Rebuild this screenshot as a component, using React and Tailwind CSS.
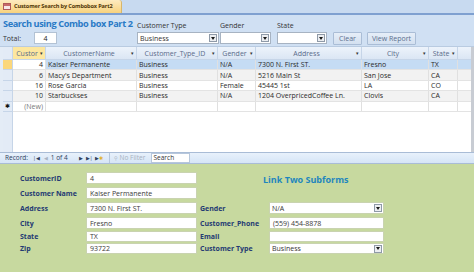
import React from "react";

const rows = [
  { id: 4, name: "Kaiser Permanente", type: "Business", gender: "N/A", address: "7300 N. First ST.", city: "Fresno", state: "TX" },
  { id: 6, name: "Macy's Department", type: "Business", gender: "N/A", address: "5216 Main St", city: "San Jose", state: "CA" },
  { id: 16, name: "Rose Garcia", type: "Business", gender: "Female", address: "45445 1st", city: "LA", state: "CO" },
  { id: 10, name: "Starbuckses", type: "Business", gender: "N/A", address: "1204 OverpricedCoffee Ln.", city: "Clovis", state: "CA" },
];

const columns = [
  { key: "id", label: "Custor", w: "w-[33px]", align: "justify-end pr-[2px]", head: "bg-[#fde79f]" },
  { key: "name", label: "CustomerName", w: "w-[91px]", align: "justify-start pl-[2px]" },
  { key: "type", label: "Customer_Type_ID", w: "w-[81px]", align: "justify-start pl-[2px]" },
  { key: "gender", label: "Gender", w: "w-[38px]", align: "justify-start pl-[2px]" },
  { key: "address", label: "Address", w: "w-[106px]", align: "justify-start pl-[2px]" },
  { key: "city", label: "City", w: "w-[67px]", align: "justify-start pl-[2px]" },
  { key: "state", label: "State", w: "w-[29px]", align: "justify-start pl-[2px]" },
];

const DropBtn = () => (
  <span className="flex h-[8px] w-[8px] shrink-0 items-center justify-center border border-[#8f9aa8] bg-[#eceef1]">
    <svg width="4" height="3" viewBox="0 0 4 3">
      <path d="M0 0h4L2 3z" fill="#1a1a1a" />
    </svg>
  </span>
);

const Combo = ({ value, className }) => (
  <div className={`flex items-center justify-between border bg-white pl-[2px] pr-[1px] text-[7px] leading-none ${className}`}>
    <span className="text-[#333]">{value}</span>
    <DropBtn />
  </div>
);

const FormLabel = ({ children, w }) => (
  <div className={`${w} whitespace-nowrap text-[7px] font-bold leading-none text-[#243a73]`}>{children}</div>
);

const FormBox = ({ children, className }) => (
  <div className={`flex items-center border border-[#c9d3b0] bg-white pl-[3px] text-[7px] leading-none text-[#3a3a3a] ${className}`}>
    {children}
  </div>
);

export default function App() {
  return (
    <div className="h-[272px] w-[474px] overflow-hidden bg-white font-['Open_Sans',sans-serif] leading-none">
      {/* Tab strip */}
      <div className="flex h-[13px] items-end bg-[#c8daf0]">
        <div className="flex h-[13px] w-[122px] items-center gap-[3px] rounded-tr-[3px] border-r border-[#d8b66a] bg-gradient-to-b from-[#fdebc0] to-[#f8d27c] pl-[3px]">
          <span className="flex h-[7px] w-[8px] shrink-0 flex-col border border-[#b05a5a] bg-[#f7e7e7]">
            <span className="h-[2px] w-full bg-[#c76a6a]" />
          </span>
          <span className="whitespace-nowrap text-[5.6px] font-bold tracking-[-0.15px] text-[#4f3608]">Customer Search by Combobox Part2</span>
        </div>
      </div>
      <div className="h-[2px] bg-[#7fa0d0]" />

      {/* Search header */}
      <div className="flex h-[31px] items-start bg-[#d0e0f3]">
        <div className="w-[134px] pl-[3px]">
          <div className="h-[15px] whitespace-nowrap pt-[3px] text-[9.2px] font-bold leading-[11px] tracking-[-0.4px] text-[#2a7ac6]">
            Search using Combo box Part 2
          </div>
          <div className="mt-[2px] flex items-center">
            <span className="w-[31px] text-[7px] text-[#333]">Total:</span>
            <div className="flex h-[12px] w-[23px] items-center justify-center border border-[#b3c2d4] bg-white text-[7px] text-[#222]">
              4
            </div>
          </div>
        </div>
        <div className="ml-[3px] w-[82px]">
          <div className="h-[17px] pt-[6px] text-[7px] leading-[9px] text-[#333]">Customer Type</div>
          <Combo value="Business" className="h-[12px] border-[#a7b3c2]" />
        </div>
        <div className="ml-[1px] w-[51px]">
          <div className="h-[17px] pt-[6px] text-[7px] leading-[9px] text-[#333]">Gender</div>
          <Combo value="" className="h-[12px] border-[#a7b3c2]" />
        </div>
        <div className="ml-[6px] w-[50px]">
          <div className="h-[17px] pt-[6px] text-[7px] leading-[9px] text-[#333]">State</div>
          <Combo value="" className="h-[12px] border-[#a7b3c2]" />
        </div>
        <button className="ml-[6px] mt-[17px] flex h-[13px] w-[29px] items-center justify-center rounded-[1px] border border-[#aabdd6] bg-gradient-to-b from-[#e6eef8] to-[#d3e0f0] text-[7px] text-[#5b6f8e]">
          Clear
        </button>
        <button className="ml-[5px] mt-[17px] flex h-[13px] w-[49px] items-center justify-center rounded-[1px] border border-[#aabdd6] bg-gradient-to-b from-[#e6eef8] to-[#d3e0f0] text-[7px] text-[#5b6f8e]">
          View Report
        </button>
      </div>

      {/* Datasheet */}
      <div className="flex h-[106px] border-t border-[#b9cbe1] bg-white">
        <div className="w-[3px] bg-[#e4ecf6]" />
        <div className="flex w-[10px] flex-col border-r border-[#c6d5e8] bg-[#e3ebf6]">
          <div className="h-[13px] border-b border-[#c6d5e8]" />
          {rows.map((r, i) => (
            <div key={r.id} className={`h-[10.4px] border-b border-[#c6d5e8] ${i === 0 ? "bg-[#fbd77c]" : ""}`} />
          ))}
          <div className="flex h-[10.4px] items-center justify-center border-b border-[#c6d5e8] text-[6px] text-[#111]">✱</div>
        </div>
        <div className="flex flex-1 flex-col">
          <div className="flex h-[13px] border-b border-[#c6d5e8] bg-gradient-to-b from-[#edf3fb] to-[#dbe6f4]">
            {columns.map((c) => (
              <div key={c.key} className={`relative flex ${c.w} items-center justify-center overflow-hidden border-r border-[#c6d5e8] text-[7px] text-[#5a6b8a] ${c.head || ""}`}>
                <span className="whitespace-nowrap pr-[4px]">{c.label}</span>
                <span className="absolute right-[2px] text-[5px] text-[#333]">▾</span>
              </div>
            ))}
          </div>
          {rows.map((r, i) => (
            <div key={r.id} className={`flex h-[10.4px] border-b border-[#e3e3e3] ${i === 0 ? "bg-[#c5dcf4]" : i % 2 === 1 ? "bg-[#f2f2f2]" : "bg-white"}`}>
              {columns.map((c) => (
                <div
                  key={c.key}
                  className={`flex ${c.w} items-center overflow-hidden whitespace-nowrap border-r border-[#e0e0e0] text-[7px] text-[#2a2a2a] ${c.align} ${i === 0 && c.key === "id" ? "bg-white" : ""}`}
                >
                  {r[c.key]}
                </div>
              ))}
            </div>
          ))}
          <div className="flex h-[10.4px] border-b border-[#e3e3e3]">
            {columns.map((c) => (
              <div key={c.key} className={`flex ${c.w} items-center justify-end border-r border-[#e0e0e0] pr-[2px] text-[7px] text-[#7a7a7a]`}>
                {c.key === "id" ? "(New)" : ""}
              </div>
            ))}
          </div>
        </div>
        <div className="w-[3px] bg-[#c8ccd3]" />
      </div>

      {/* Record navigation */}
      <div className="flex h-[12px] items-center border-y border-[#a9bcd6] bg-gradient-to-b from-[#e8f1fb] to-[#d6e5f6] pl-[5px] text-[6.5px] text-[#2e3f5c]">
        <span>Record:</span>
        <span className="ml-[5px] text-[5px]">|◀</span>
        <span className="ml-[4px] text-[5px] text-[#a9b4c4]">◀</span>
        <span className="ml-[3px] w-[24px]">1 of 4</span>
        <span className="ml-[4px] text-[5px]">▶</span>
        <span className="ml-[3px] text-[5px]">▶|</span>
        <span className="ml-[2px] text-[5px]">▶<span className="text-[#e0b030]">✱</span></span>
        <span className="ml-[6px] flex h-[10px] w-[41px] items-center gap-[2px] border-l border-[#b7c7dc] pl-[4px] text-[#a8b2c0]">
          <span className="text-[5px]">⚲</span>No Filter
        </span>
        <span className="ml-[1px] flex h-[10px] w-[39px] items-center border border-[#b7c7dc] bg-white pl-[2px] text-[#333]">Search</span>
      </div>

      {/* Detail form */}
      <div className="flex h-[108px] bg-[#c7d99f] pl-[20px]">
        <div className="flex w-[177px] flex-col pt-[8px]">
          {[
            ["CustomerID", "4", "mt-0 h-[12px]"],
            ["Customer Name", "Kaiser Permanente", "mt-[3px] h-[12px]"],
            ["Address", "7300 N. First ST.", "mt-[3px] h-[12px]"],
            ["City", "Fresno", "mt-[3px] h-[12px]"],
            ["State", "TX", "mt-[2px] h-[11px]"],
            ["Zip", "93722", "mt-[1px] h-[11px]"],
          ].map(([label, value, cls]) => (
            <div key={label} className={`flex items-center ${cls}`}>
              <FormLabel w="w-[66px]">{label}</FormLabel>
              <FormBox className="h-full w-[111px]">{value}</FormBox>
            </div>
          ))}
        </div>
        <div className="ml-[3px] flex w-[184px] flex-col pt-[10px]">
          <div className="h-[11px] pl-[63px] text-[9px] font-bold leading-[11px] text-[#1f86be]">Link Two Subforms</div>
          <div className="mt-[17px] flex h-[12px] items-center">
            <FormLabel w="w-[69px]">Gender</FormLabel>
            <Combo value="N/A" className="h-full w-[115px] border-[#c9d3b0]" />
          </div>
          <div className="mt-[3px] flex h-[12px] items-center">
            <FormLabel w="w-[69px]">Customer_Phone</FormLabel>
            <FormBox className="h-full w-[115px]">(559) 454-8878</FormBox>
          </div>
          <div className="mt-[2px] flex h-[11px] items-center">
            <FormLabel w="w-[69px]">Email</FormLabel>
            <FormBox className="h-full w-[115px]" />
          </div>
          <div className="mt-[1px] flex h-[11px] items-center">
            <FormLabel w="w-[69px]">Customer Type</FormLabel>
            <Combo value="Business" className="h-full w-[115px] border-[#c9d3b0]" />
          </div>
        </div>
      </div>
    </div>
  );
}
